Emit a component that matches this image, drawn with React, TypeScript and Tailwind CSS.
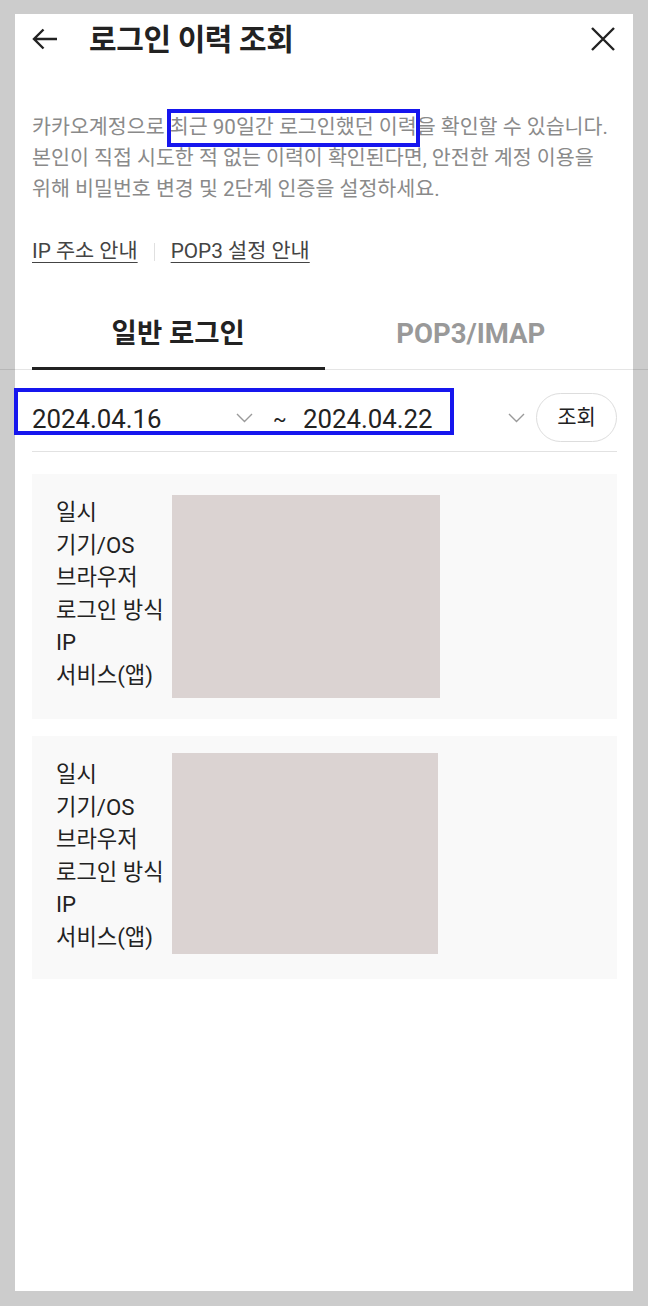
const LABELS = ['일시', '기기/OS', '브라우저', '로그인 방식', 'IP', '서비스(앱)']

const RECORDS = [
  { id: 1, pad: 'pt-[21px] pb-[21px]', labelPad: 'pt-[1px]', box: 'w-[268px] h-[203px]' },
  { id: 2, pad: 'pt-[17px] pb-[25px]', labelPad: 'pt-[5px]', box: 'w-[266px] h-[201px]' },
]

function Chevron() {
  return (
    <svg width="17" height="10" viewBox="0 0 17 10" fill="none" className="shrink-0">
      <path d="M1 1l7.5 7.5L16 1" stroke="#9a9a9a" strokeWidth="1.4" />
    </svg>
  )
}

export default function App() {
  return (
    <div
      className="w-[648px] h-[1306px] bg-[#cccccc] px-[15px] pt-[14px] pb-[15px] overflow-hidden"
      style={{ fontFamily: 'Roboto, "Noto Sans CJK KR", sans-serif' }}
    >
      <div className="h-full bg-white pl-[17px] pr-[16px]">
        {/* Header */}
        <div className="h-[50px] flex items-center">
          <svg width="26" height="22" viewBox="0 0 26 22" fill="none">
            <path d="M25 11H2M11.5 1.5L2 11l9.5 9.5" stroke="#222" strokeWidth="2.4" />
          </svg>
          <h1 className="ml-[31px] text-[30px] font-bold text-[#222] tracking-[-0.4px]">로그인 이력 조회</h1>
          <svg width="24" height="24" viewBox="0 0 24 24" fill="none" className="ml-auto mr-[2px]">
            <path d="M1 1l22 22M23 1L1 23" stroke="#222" strokeWidth="2.4" />
          </svg>
        </div>

        {/* Description */}
        <p className="mt-[48px] text-[20.6px] leading-[31px] text-[#8a8a8a] whitespace-nowrap">
          카카오계정으로{' '}
          <span className="relative">
            최근 90일간 로그인했던 이력
            <span className="absolute left-[-3px] right-[-3px] top-[-6px] bottom-[-8px] border-4 border-[#1616ee]" />
          </span>
          을 확인할 수 있습니다.
          <br />
          본인이 직접 시도한 적 없는 이력이 확인된다면, 안전한 계정 이용을
          <br />
          위해 비밀번호 변경 및 2단계 인증을 설정하세요.
        </p>

        {/* Links */}
        <div className="mt-[31px] flex items-center text-[20.8px] leading-[31px] text-[#444]">
          <span className="underline underline-offset-[4px] decoration-1">IP 주소 안내</span>
          <span className="mx-[16px] h-[18px] w-px bg-[#e0e0e0]" />
          <span className="underline underline-offset-[4px] decoration-1">POP3 설정 안내</span>
        </div>

        {/* Tabs */}
        <div className="mt-[51px] -ml-[32px] -mr-[31px] pl-[32px] pr-[31px] border-b border-black/10">
          <div className="flex">
            <div className="flex-1 -mb-px pb-[17px] border-b-[3px] border-[#222] text-center text-[27.5px] leading-[32px] font-bold text-[#222]">
              일반 로그인
            </div>
            <div className="flex-1 -mb-px pb-[17px] border-b-[3px] border-transparent text-center text-[27.5px] leading-[32px] font-bold text-[#999]">
              POP3/IMAP
            </div>
          </div>
        </div>

        {/* Date range */}
        <div className="mt-[23px] pb-[9px] border-b border-[#e2e2e2]">
          <div className="relative h-[49px] flex items-center text-[25.8px] text-[#222]">
            <div className="w-[221px] flex items-center justify-between">
              <span className="pt-[3px]">2024.04.16</span>
              <Chevron />
            </div>
            <span className="ml-[20px] w-[14px] text-[20px] pt-[3px]">~</span>
            <div className="ml-[16px] w-[222px] flex items-center justify-between">
              <span className="pt-[3px]">2024.04.22</span>
              <Chevron />
            </div>
            <button className="ml-[11px] w-[81px] h-[49px] rounded-full border border-[#dddddd] text-[21px] text-[#222]">
              조회
            </button>
            <span className="absolute left-[-18px] top-[-5px] w-[440px] h-[47px] border-4 border-[#1616ee]" />
          </div>
        </div>

        {/* Records */}
        <div className="mt-[22px] flex flex-col gap-[17px]">
          {RECORDS.map((r) => (
            <div key={r.id} className={`flex items-start bg-[#f9f9f9] pl-[24px] ${r.pad}`}>
              <div className={`w-[116px] text-[22.2px] leading-[32.5px] text-[#222] ${r.labelPad}`}>
                {LABELS.map((l) => (
                  <div key={l} className="whitespace-nowrap">{l}</div>
                ))}
              </div>
              <div className={`bg-[#dbd3d2] ${r.box}`} />
            </div>
          ))}
        </div>
      </div>
    </div>
  )
}
